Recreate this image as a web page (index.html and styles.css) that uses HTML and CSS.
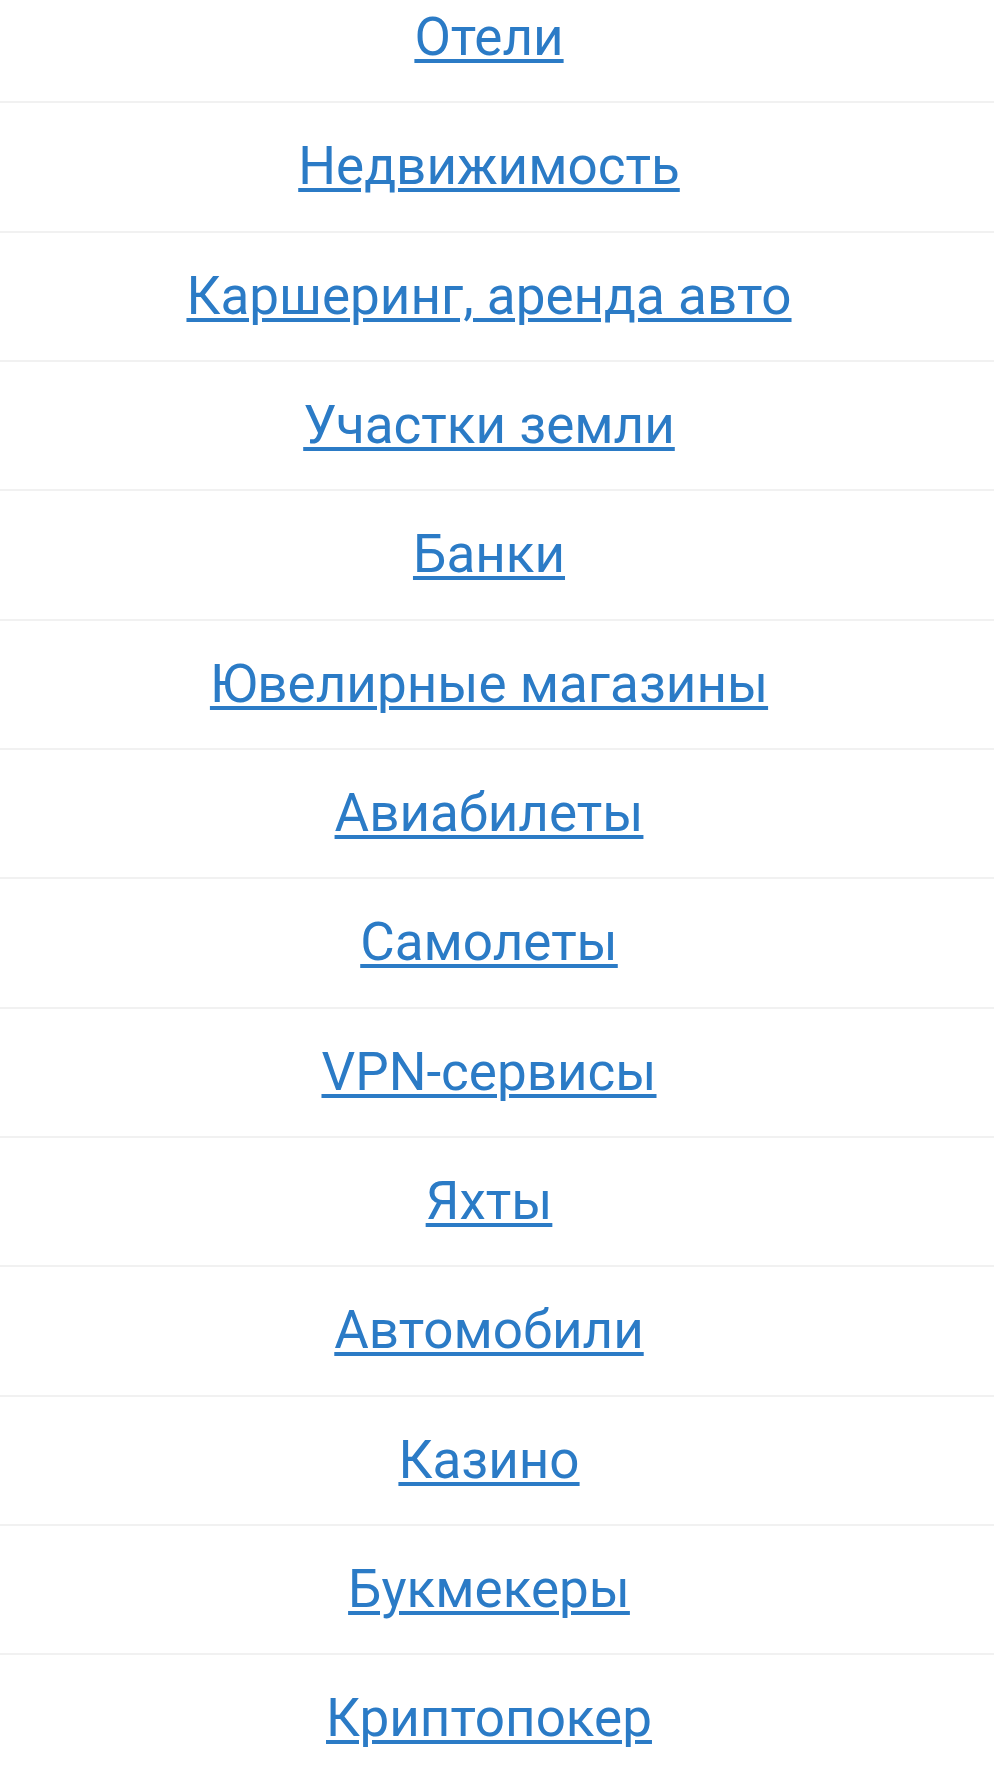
FILE: index.html
```html
<!DOCTYPE html>
<html lang="ru">
<head>
  <meta charset="utf-8">
  <link rel="stylesheet" href="styles.css">
</head>
<body>
  <ul class="category-list">
    <li class="category"><a href="#">Отели</a></li>
    <li class="category"><a href="#">Недвижимость</a></li>
    <li class="category"><a href="#">Каршеринг, аренда авто</a></li>
    <li class="category"><a href="#">Участки земли</a></li>
    <li class="category"><a href="#">Банки</a></li>
    <li class="category"><a href="#">Ювелирные магазины</a></li>
    <li class="category"><a href="#">Авиабилеты</a></li>
    <li class="category"><a href="#">Самолеты</a></li>
    <li class="category"><a href="#">VPN-сервисы</a></li>
    <li class="category"><a href="#">Яхты</a></li>
    <li class="category"><a href="#">Автомобили</a></li>
    <li class="category"><a href="#">Казино</a></li>
    <li class="category"><a href="#">Букмекеры</a></li>
    <li class="category"><a href="#">Криптопокер</a></li>
  </ul>
</body>
</html>
```

FILE: styles.css
```css
body {
  margin: 0;
  background: #fff;
  font-family: Roboto, "Noto Sans", sans-serif;
  overflow: hidden;
}

.category-list {
  list-style: none;
  margin: -26px 0 0;
  padding: 0;
}

.category {
  height: 127.33px;
  padding-right: 16px;
  display: flex;
  justify-content: center;
  align-items: center;
  border-bottom: 2px solid #f1f1f1;
}

.category a {
  color: #2b7bc6;
  font-size: 53px;
  line-height: 1;
  text-decoration: underline;
  text-decoration-thickness: 4px;
  text-underline-offset: 4px;
}
```
